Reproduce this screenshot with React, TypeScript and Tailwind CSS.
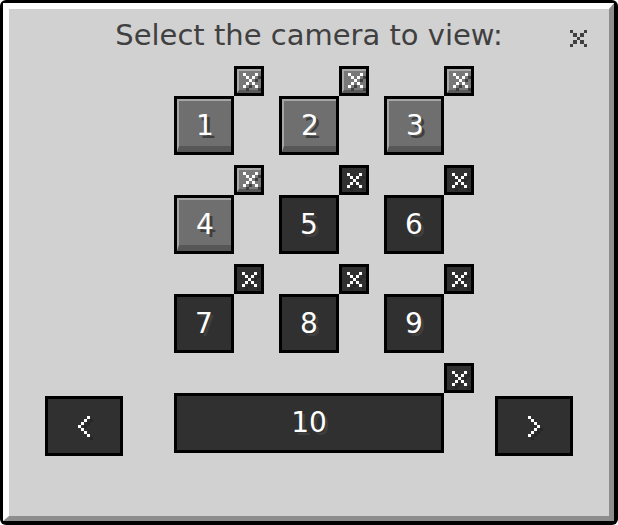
import React from "react";
import clsx from "clsx";

// Minecraft-style camera picker panel

type Tone = "grey" | "dark";

const X_CELLS = [
  [0, 0], [4, 0], [1, 1], [3, 1], [2, 2], [1, 3], [3, 3], [0, 4], [4, 4],
];
const LEFT_CELLS = [
  [3, 0], [2, 1], [1, 2], [0, 3], [1, 4], [2, 5], [3, 6],
];
const RIGHT_CELLS = LEFT_CELLS.map(([x, y]) => [3 - x, y]);

function PixelGlyph({
  cells,
  cols,
  rows,
  unit = 3,
  color = "#ffffff",
  shadow,
}: {
  cells: number[][];
  cols: number;
  rows: number;
  unit?: number;
  color?: string;
  shadow?: string;
}) {
  return (
    <svg
      width={cols * unit}
      height={rows * unit}
      viewBox={`0 0 ${cols} ${rows}`}
      shapeRendering="crispEdges"
      className="overflow-visible"
    >
      {shadow &&
        cells.map(([x, y]) => (
          <rect key={`s${x}-${y}`} x={x + 1} y={y + 1} width={1} height={1} fill={shadow} />
        ))}
      {cells.map(([x, y]) => (
        <rect key={`c${x}-${y}`} x={x} y={y} width={1} height={1} fill={color} />
      ))}
    </svg>
  );
}

function Label({ children }: { children: React.ReactNode }) {
  return (
    <span className="text-[28px] leading-none text-white [text-shadow:3px_3px_0_#3f3f3f]">
      {children}
    </span>
  );
}

function BigSlot({ tone, className, children }: { tone: Tone; className?: string; children: React.ReactNode }) {
  return (
    <div className={clsx("bg-black p-[3px]", className)}>
      {tone === "grey" ? (
        <div className="flex h-full w-full items-center justify-center border-t-2 border-l-2 border-b-[6px] border-t-[#a6a6a6] border-l-[#a6a6a6] border-b-[#575757] bg-[#6f6f6f] pt-[4px]">
          {children}
        </div>
      ) : (
        <div className="flex h-full w-full items-center justify-center bg-[#303030]">{children}</div>
      )}
    </div>
  );
}

function RemoveBadge({ tone }: { tone: Tone }) {
  return (
    <div className="absolute left-full bottom-full h-[30px] w-[30px] bg-black p-[3px]">
      {tone === "grey" ? (
        <div className="flex h-full w-full items-center justify-center border-t-2 border-l-2 border-b-[3px] border-t-[#a9a9a9] border-l-[#a9a9a9] border-b-[#5a5a5a] bg-[#787878]">
          <PixelGlyph cells={X_CELLS} cols={5} rows={5} shadow="#3f3f3f" />
        </div>
      ) : (
        <div className="flex h-full w-full items-center justify-center bg-[#303030]">
          <PixelGlyph cells={X_CELLS} cols={5} rows={5} shadow="#262626" />
        </div>
      )}
    </div>
  );
}

function CameraButton({ n, tone }: { n: number; tone: Tone }) {
  return (
    <div className="relative">
      <BigSlot tone={tone} className="h-[59px] w-[60px]">
        <Label>{n}</Label>
      </BigSlot>
      <RemoveBadge tone={tone} />
    </div>
  );
}

const ROWS: { n: number; tone: Tone }[][] = [
  [{ n: 1, tone: "grey" }, { n: 2, tone: "grey" }, { n: 3, tone: "grey" }],
  [{ n: 4, tone: "grey" }, { n: 5, tone: "dark" }, { n: 6, tone: "dark" }],
  [{ n: 7, tone: "dark" }, { n: 8, tone: "dark" }, { n: 9, tone: "dark" }],
];

export default function App() {
  return (
    <div className="h-[525px] w-[618px] bg-white font-['DejaVu_Sans',sans-serif]">
      <div className="h-full w-full rounded-[6px] bg-black pt-[3px] pl-[3px] pr-[4px] pb-[4px]">
        <div className="relative flex h-full w-full flex-col items-center border-t-[6px] border-l-[6px] border-r-[5px] border-b-[5px] border-t-white border-l-white border-r-[#8d8d8d] border-b-[#8d8d8d] bg-[#d1d1d1]">
          {/* Title */}
          <h1 className="pt-[10px] text-[29px] leading-[32px] text-[#404040]">Select the camera to view:</h1>

          {/* Close */}
          <button type="button" className="absolute top-[21px] right-[22px]" aria-label="Close">
            <PixelGlyph cells={X_CELLS} cols={5} rows={5} unit={3.4} color="#404040" />
          </button>

          {/* Camera grid */}
          <div className="mt-[45px] flex flex-col items-center gap-[40px]">
            {ROWS.map((row, i) => (
              <div key={i} className="flex gap-[45px]">
                {row.map((c) => (
                  <CameraButton key={c.n} n={c.n} tone={c.tone} />
                ))}
              </div>
            ))}

            {/* Pager row */}
            <div className="flex items-start gap-[51px]">
              <BigSlot tone="dark" className="mt-[3px] h-[60px] w-[78px]">
                <PixelGlyph cells={LEFT_CELLS} cols={4} rows={7} shadow="#262626" />
              </BigSlot>
              <div className="relative">
                <BigSlot tone="dark" className="h-[60px] w-[270px]">
                  <Label>10</Label>
                </BigSlot>
                <RemoveBadge tone="dark" />
              </div>
              <BigSlot tone="dark" className="mt-[3px] h-[60px] w-[78px]">
                <PixelGlyph cells={RIGHT_CELLS} cols={4} rows={7} shadow="#262626" />
              </BigSlot>
            </div>
          </div>
        </div>
      </div>
    </div>
  );
}
